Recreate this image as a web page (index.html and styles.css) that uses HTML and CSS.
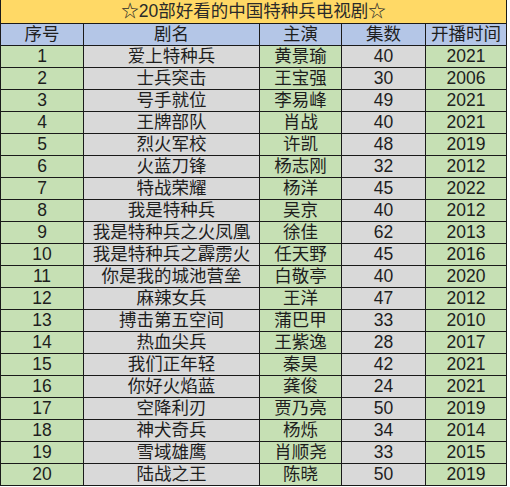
FILE: index.html
```html
<!DOCTYPE html>
<html lang="zh">
<head>
<meta charset="utf-8">
<link rel="stylesheet" href="styles.css">
</head>
<body>
<div class="sheet">
  <div class="title">☆20部好看的中国特种兵电视剧☆</div>
  <div class="c hd">序号</div><div class="c hd">剧名</div><div class="c hd">主演</div><div class="c hd">集数</div><div class="c hd">开播时间</div>
  <div class="c g">1</div><div class="c s">爱上特种兵</div><div class="c g">黄景瑜</div><div class="c s">40</div><div class="c g">2021</div>
  <div class="c g">2</div><div class="c s">士兵突击</div><div class="c g">王宝强</div><div class="c s">30</div><div class="c g">2006</div>
  <div class="c g">3</div><div class="c s">号手就位</div><div class="c g">李易峰</div><div class="c s">49</div><div class="c g">2021</div>
  <div class="c g">4</div><div class="c s">王牌部队</div><div class="c g">肖战</div><div class="c s">40</div><div class="c g">2021</div>
  <div class="c g">5</div><div class="c s">烈火军校</div><div class="c g">许凯</div><div class="c s">48</div><div class="c g">2019</div>
  <div class="c g">6</div><div class="c s">火蓝刀锋</div><div class="c g">杨志刚</div><div class="c s">32</div><div class="c g">2012</div>
  <div class="c g">7</div><div class="c s">特战荣耀</div><div class="c g">杨洋</div><div class="c s">45</div><div class="c g">2022</div>
  <div class="c g">8</div><div class="c s">我是特种兵</div><div class="c g">吴京</div><div class="c s">40</div><div class="c g">2012</div>
  <div class="c g">9</div><div class="c s">我是特种兵之火凤凰</div><div class="c g">徐佳</div><div class="c s">62</div><div class="c g">2013</div>
  <div class="c g">10</div><div class="c s">我是特种兵之霹雳火</div><div class="c g">任天野</div><div class="c s">45</div><div class="c g">2016</div>
  <div class="c g">11</div><div class="c s">你是我的城池营垒</div><div class="c g">白敬亭</div><div class="c s">40</div><div class="c g">2020</div>
  <div class="c g">12</div><div class="c s">麻辣女兵</div><div class="c g">王洋</div><div class="c s">47</div><div class="c g">2012</div>
  <div class="c g">13</div><div class="c s">搏击第五空间</div><div class="c g">蒲巴甲</div><div class="c s">33</div><div class="c g">2010</div>
  <div class="c g">14</div><div class="c s">热血尖兵</div><div class="c g">王紫逸</div><div class="c s">28</div><div class="c g">2017</div>
  <div class="c g">15</div><div class="c s">我们正年轻</div><div class="c g">秦昊</div><div class="c s">42</div><div class="c g">2021</div>
  <div class="c g">16</div><div class="c s">你好火焰蓝</div><div class="c g">龚俊</div><div class="c s">24</div><div class="c g">2021</div>
  <div class="c g">17</div><div class="c s">空降利刃</div><div class="c g">贾乃亮</div><div class="c s">50</div><div class="c g">2019</div>
  <div class="c g">18</div><div class="c s">神犬奇兵</div><div class="c g">杨烁</div><div class="c s">34</div><div class="c g">2014</div>
  <div class="c g">19</div><div class="c s">雪域雄鹰</div><div class="c g">肖顺尧</div><div class="c s">33</div><div class="c g">2015</div>
  <div class="c g">20</div><div class="c s">陆战之王</div><div class="c g">陈晓</div><div class="c s">50</div><div class="c g">2019</div>
</div>
</body>
</html>
```
FILE: styles.css
```css
html, body {
  margin: 0;
  padding: 0;
  background: #ffffff;
}
body {
  font-family: "Liberation Sans", "Noto Sans CJK SC", sans-serif;
  color: #1e1e1e;
}
.sheet {
  display: grid;
  grid-template-columns: 82px 175px 81px 83px 80px;
  grid-template-rows: 23px repeat(21, 21px);
  gap: 1px;
  padding: 0 1px 1px 1px;
  background: #1a1a1a;
  width: 505px;
}
.title {
  grid-column: 1 / -1;
  background: #ffd966;
  display: flex;
  align-items: center;
  justify-content: center;
  font-size: 17.5px;
  line-height: 1;
  color: #2a2a2a;
}
.c {
  display: flex;
  align-items: center;
  justify-content: center;
  font-size: 17.5px;
  line-height: 1;
  white-space: nowrap;
  overflow: hidden;
}
.hd { background: #b4c6e7; }
.g { background: #c6e0b4; }
.s { background: #d9d9d9; }
```
